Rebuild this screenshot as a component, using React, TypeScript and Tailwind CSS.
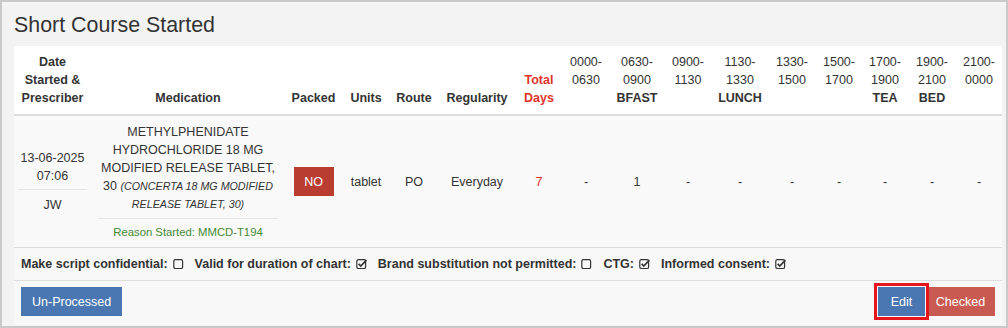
import React from 'react';

const font = { fontFamily: '"Liberation Sans", Arial, Helvetica, sans-serif' };

const slots = [
  { from: '0000-', to: '0630', label: '', value: '-' },
  { from: '0630-', to: '0900', label: 'BFAST', value: '1' },
  { from: '0900-', to: '1130', label: '', value: '-' },
  { from: '1130-', to: '1330', label: 'LUNCH', value: '-' },
  { from: '1330-', to: '1500', label: '', value: '-' },
  { from: '1500-', to: '1700', label: '', value: '-' },
  { from: '1700-', to: '1900', label: 'TEA', value: '-' },
  { from: '1900-', to: '2100', label: 'BED', value: '-' },
  { from: '2100-', to: '0000', label: '', value: '-' },
];

const slotWidths = ['w-[48px]', 'w-[54px]', 'w-[48px]', 'w-[56px]', 'w-[48px]', 'w-[46px]', 'w-[46px]', 'w-[48px]', 'w-[46px]'];

function Box({ checked }: { checked?: boolean }) {
  return (
    <svg width="11" height="12" viewBox="0 0 11 12" className="inline-block ml-[5px] -mt-[2px] align-middle">
      <rect x="0.8" y="1.7" width="8.8" height="8.8" rx="1.6" fill="none" stroke="#333" strokeWidth="1.2" />
      {checked && <path d="M2.6 5.8 L4.8 8 L10.4 2.2" fill="none" stroke="#333" strokeWidth="1.7" />}
    </svg>
  );
}

function Flag({ label, checked }: { label: string; checked?: boolean }) {
  return (
    <span className="font-bold whitespace-nowrap">
      {label}
      <Box checked={checked} />
    </span>
  );
}

export default function App() {
  return (
    <div style={font} className="w-[1008px] h-[328px] border-2 border-[#c9c9c9] bg-[#f3f3f3] pl-3 pt-[11px] text-[#333] overflow-hidden">
      <h3 className="text-[21.4px] leading-[24px] mb-[9px]">Short Course Started</h3>

      <table className="w-[988px] table-fixed border-collapse text-[12.5px] leading-[18px]">
        <colgroup>
          <col className="w-[77px]" />
          <col className="w-[194px]" />
          <col className="w-[57px]" />
          <col className="w-[48px]" />
          <col className="w-[48px]" />
          <col className="w-[78px]" />
          <col className="w-[46px]" />
          {slotWidths.map((w, i) => (
            <col key={i} className={w} />
          ))}
        </colgroup>
        <thead>
          <tr className="bg-white border-b-2 border-[#dddddd]">
            <th className="px-1 py-[7px] align-bottom">Date Started &amp; Prescriber</th>
            <th className="px-[7px] py-[7px] align-bottom">Medication</th>
            <th className="px-1 py-[7px] align-bottom">Packed</th>
            <th className="px-1 py-[7px] align-bottom">Units</th>
            <th className="px-1 py-[7px] align-bottom">Route</th>
            <th className="px-1 py-[7px] align-bottom">Regularity</th>
            <th className="px-1 py-[7px] align-bottom text-[#e0332a]">Total Days</th>
            {slots.map((s) => (
              <th key={s.from} className="px-0 py-[7px] align-top">
                <div className="font-normal">{s.from}</div>
                <div className="font-normal">{s.to}</div>
                {s.label && <div>{s.label}</div>}
              </th>
            ))}
          </tr>
        </thead>
        <tbody>
          <tr className="bg-[#f9f9f9] text-center">
            <td className="px-1 py-[7px] align-middle">
              <div>13-06-2025</div>
              <div>07:06</div>
              <div className="mt-[4px] border-t border-[#e6e6e6] pt-[6px]">JW</div>
            </td>
            <td className="px-[7px] py-[7px] align-middle">
              <div className="pb-[5px]">
                METHYLPHENIDATE HYDROCHLORIDE 18 MG MODIFIED RELEASE TABLET, 30{' '}
                <i className="text-[10.7px]">(CONCERTA 18 MG MODIFIED RELEASE TABLET, 30)</i>
              </div>
              <div className="border-t border-[#e6e6e6] pt-[5px] text-[11.3px] leading-[16px] text-[#458a35]">
                Reason Started: MMCD-T194
              </div>
            </td>
            <td className="px-1 align-middle">
              <span className="inline-flex h-[29px] w-[40px] items-center justify-center bg-[#b93d30] text-white">NO</span>
            </td>
            <td className="px-1 align-middle">tablet</td>
            <td className="px-1 align-middle">PO</td>
            <td className="px-1 align-middle">Everyday</td>
            <td className="px-1 align-middle text-[#e0332a]">7</td>
            {slots.map((s) => (
              <td key={s.from} className="px-0 align-middle">
                {s.value}
              </td>
            ))}
          </tr>
          <tr className="bg-[#f8f8f8] border-t border-[#dddddd]">
            <td colSpan={16} className="px-[7px] py-[7px]">
              <div className="flex items-center gap-[11px]">
                <Flag label="Make script confidential:" />
                <Flag label="Valid for duration of chart:" checked />
                <Flag label="Brand substitution not permitted:" />
                <Flag label="CTG:" checked />
                <Flag label="Informed consent:" checked />
              </div>
            </td>
          </tr>
          <tr className="bg-[#f8f8f8] border-t border-[#dddddd]">
            <td colSpan={16} className="px-[7px] pt-[6px] pb-[9px]">
              <div className="flex items-center justify-between">
                <button className="h-[29px] px-[11px] bg-[#4a77b1] text-white">Un-Processed</button>
                <div className="flex">
                  <button className="h-[29px] w-[47px] bg-[#4a77b1] text-white outline-[3px] outline-solid outline-[#e5161d] outline-offset-[1px] relative z-10">
                    Edit
                  </button>
                  <button className="h-[29px] w-[69px] ml-[1px] bg-[#c85a51] text-white">Checked</button>
                </div>
              </div>
            </td>
          </tr>
        </tbody>
      </table>
    </div>
  );
}
